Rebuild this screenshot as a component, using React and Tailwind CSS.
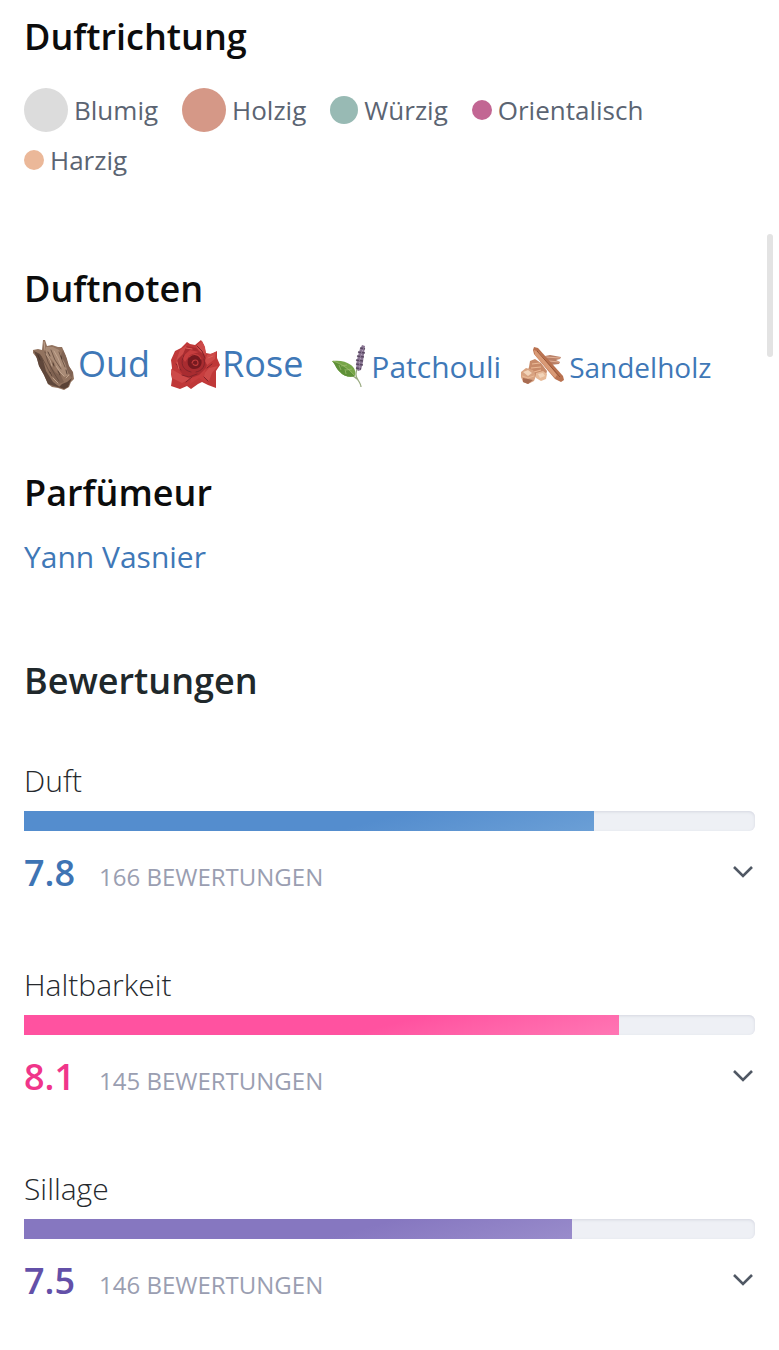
const accords = [
  { name: 'Blumig', dot: 'size-11 bg-[#dcdcdc]' },
  { name: 'Holzig', dot: 'size-11 bg-[#d59887]' },
  { name: 'Würzig', dot: 'size-7 bg-[#98bab4]' },
  { name: 'Orientalisch', dot: 'size-5 bg-[#c26693]' },
  { name: 'Harzig', dot: 'size-5 bg-[#ebb899]' },
];

const ratings = [
  { name: 'Duft', score: 7.8, fill: 78, votes: 166, text: 'text-[#3e74b4]', bar: 'from-[#548dce] to-[#6b9fd6]' },
  { name: 'Haltbarkeit', score: 8.1, fill: 81.4, votes: 145, text: 'text-[#f0358a]', bar: 'from-[#ff52a0] to-[#ff76b4]' },
  { name: 'Sillage', score: 7.5, fill: 75, votes: 146, text: 'text-[#6350a8]', bar: 'from-[#8677c0] to-[#998ccb]' },
];

function OudIcon() {
  return (
    <svg viewBox="0 0 54 54" className="size-[54px] shrink-0" aria-hidden="true">
      <path d="M19 3l2 0 2 6 5-1 6 2 4 0 4 9 2 9 5 7 1 7-3 3-2 5-5 3-6-2-6-1-4-3-4-9-5-9-2-8-4-5 0-3 5-1 4 1z" fill="#92735f" />
      <path d="M10 14l6 3 3 6 3 11 7 11 8 6-7-2-6-2-4-9-5-9-2-7z" fill="#5f473b" />
      <path d="M22 10l7 0 6 3 4 10 6 9 1 6-6 2-5-6-6-10-7-7z" fill="#a98b76" />
      <path d="M39 13l4 9 2 7 4 7-1 5-4-5-3-10-4-8z" fill="#806353" />
      <path d="M25 26l6 9 6 4 3 6-5 2-5-6-4-8z" fill="#7f6251" />
      <g fill="none" strokeLinecap="round">
        <path d="M21 15l3 10 6 11 5 8M27 13l4 10 6 9M35 15l3 8 3 7M17 19l5 9 4 8" stroke="#5f4739" strokeWidth="1" opacity=".75" />
        <path d="M22 17l4 6 2 6M30 14l4 7 3 8M32 29l4 6 4 4M20 5l1 8M29 41l5 5M42 41l3-3" stroke="#c8ad97" strokeWidth="1" opacity=".8" />
        <path d="M24 15l2 4M29 26l1 3M34 34l2 4M37 19l1 3M42 33l1 4M26 35l2 4M14 18l2 5" stroke="#3d2b22" strokeWidth="1" opacity=".7" />
      </g>
      <path d="M38 47l5-2 5-4-2 4-2 5-4 2-5-2z" fill="#5a4236" />
    </svg>
  );
}

function RoseIcon() {
  return (
    <svg viewBox="0 0 54 54" className="size-[54px] shrink-0" aria-hidden="true">
      <path d="M19 5l3 2 5 1 6-5 3 5 2 8 5 1 6-3 0 7 3 7-4 6 0 6 0 11-8-3-6-3-4 2-7 5-4-3-7 3-9-3 1-7-1-5 1-6-1-8 4-9 6-3z" fill="#bf3838" />
      <path d="M18 9l10 2 8 7 3 9-3 10-9 4-12-3-6-8 1-9 5-8z" fill="#a92c30" />
      <path d="M34 4l3 6 1 8-7-4-3-5zM39 18l9-3-1 7-8 6-2-4zM41 31l9-2-6 7-3 8-7-5zM12 13l7-5-4 9-7 7zM3 32l9 5 10 5-8 4-10-5z" fill="#cd4a49" />
      <path d="M14 20l8-7 9 2-9 3-5 7zM31 38l7-7-2 9 4 7-9-6-9 6 1-6z" fill="#c63d3e" />
      <path d="M21 20c-3 5-1 12 5 12s9-5 7-10c-3-6-9-6-12-2z" fill="#75191f" />
      <g fill="none" strokeLinecap="round">
        <path d="M24 26c1-4 6-4 6 0 0 3-4 3-5 1M21 20c4-4 10-3 12 2" stroke="#c23c3c" strokeWidth="1.1" />
        <path d="M16 18c-4 8-2 15 7 17M36 22c2 7-2 12-8 13M14 38l7 2 8-3M39 31l5-4M8 27l5 6M29 9l5 5 3 7M36 40l4 4M24 40l-6 5" stroke="#84232a" strokeWidth="1" />
        <path d="M9 25l2 7M18 11l6 1M40 21l5-2" stroke="#de605a" strokeWidth="1" />
      </g>
    </svg>
  );
}

function PatchouliIcon() {
  return (
    <svg viewBox="0 0 48 48" className="size-12 shrink-0" aria-hidden="true">
      <path d="M36 25c-1 5-2 8 1 12 2 3 3 5 3 7M36 36c-2-2-4-3-6-4" fill="none" stroke="#9aab82" strokeWidth="1.3" />
      <path d="M11 18c7-1 14 0 19 4 4 3 5 7 4 11-5 2-12 0-15-4-4-3-4-7-8-11z" fill="#76a548" />
      <path d="M11 18c9 2 16 8 23 15-5 2-12 0-15-4-4-3-4-7-8-11z" fill="#5f9138" />
      <path d="M12 18c9 3 16 8 22 15M20 23l6-1M25 27l6-1M18 22l2 5M24 26l1 5" fill="none" stroke="#a1bf71" strokeWidth=".7" />
      <path d="M41 2l3 1-1 8-1 8-2 8-3 1-2-3 1-8 2-8z" fill="#8a7694" />
      <path d="M39 5l5 1M37 9l7 1M36 13l7 1M35 17l7 1M35 21l7 1M35 25l5 1" stroke="#594862" strokeWidth="1.6" strokeDasharray="3 1" />
      <path d="M38 7l5 1M37 11l5 1M36 15l5 1M35 19l5 1M35 23l4 1" stroke="#b5a5bb" strokeWidth="1.1" strokeDasharray="1 2" />
    </svg>
  );
}

function SandalwoodIcon() {
  return (
    <svg viewBox="0 0 48 48" className="size-12 shrink-0" aria-hidden="true">
      <path d="M26 13l5-1 11 2-1 2-4 1 4 2-1 2-9 1z" fill="#b98067" />
      <path d="M27 14l14 1M30 18l10 1" stroke="#e2b095" strokeWidth="1.2" />
      <path d="M11 18l5-2 6 4 6 8-1 4-9 2-10-4 2-6z" fill="#c78a69" />
      <path d="M2 29l5-4 7 2 3 6-2 5-6 3-5-2-2-5z" fill="#d8a381" />
      <path d="M17 30l7-2 4 3-1 5-5 2-5-3z" fill="#e6b997" />
      <path d="M4 29l5-2 4 3-4 3zM19 31l5-1 2 3-5 2z" fill="#f2d4b9" />
      <path d="M4 35l5 1 5 1-5 4-5-2z" fill="#a86c52" />
      <path d="M15 4l4 1 25 28 1 4-3 2-6-3-21-25-1-4z" fill="#b9714f" />
      <path d="M15 7l5 2 18 23-2 3-20-23z" fill="#d99a76" />
      <path d="M18 8l23 26" stroke="#955638" strokeWidth="1" />
      <path d="M13 21l8-1M12 25l10-1M15 29l7-2M3 33l6 2 6-2" fill="none" stroke="#eab995" strokeWidth="1.1" />
    </svg>
  );
}

const notes = [
  { name: 'Oud', Icon: OudIcon, size: 'text-[36px] leading-[54px]' },
  { name: 'Rose', Icon: RoseIcon, size: 'text-[36px] leading-[54px]' },
  { name: 'Patchouli', Icon: PatchouliIcon, size: 'gap-0.5 text-[30px] leading-[48px]' },
  { name: 'Sandelholz', Icon: SandalwoodIcon, size: 'gap-0.5 text-[28px] leading-[48px]' },
];

function Heading({ children, color = 'text-[#0c0c0c]' }) {
  return <h2 className={`text-[36px] leading-[48px] font-semibold ${color}`}>{children}</h2>;
}

function Rating({ name, score, fill, votes, text, bar }) {
  return (
    <article>
      <h3 className="text-[30px] leading-[40px] font-light text-[#25292d]">{name}</h3>
      <div className="mt-2.5 h-5 overflow-hidden rounded-r-md bg-[#eef0f5] shadow-[inset_0_1px_3px_#d5d7e1]">
        <div className={`h-full bg-linear-165 from-60% ${bar}`} style={{ width: `${fill}%` }} />
      </div>
      <div className="mt-[18px] flex items-center justify-between">
        <p className="flex items-baseline gap-6 leading-[48px]">
          <span className={`text-[36px] font-semibold ${text}`}>{score}</span>
          <span className="text-[24px] text-[#9a9eb1]">{votes} BEWERTUNGEN</span>
        </p>
        <button type="button" aria-label={`${name}: Details anzeigen`} className="mb-1.5 p-0.5">
          <svg viewBox="0 0 20 12" className="h-3 w-5" fill="none" stroke="#505864" strokeWidth="2.6">
            <path d="M1 1l9 9 9-9" />
          </svg>
        </button>
      </div>
    </article>
  );
}

export default function App() {
  return (
    <main className="relative bg-white px-6 pt-[13px] pb-10 font-['Open_Sans',sans-serif]">
      <div className="absolute top-[234px] right-1.5 h-[123px] w-1.5 rounded-full bg-[#e3e3e3]" />

      <section>
        <Heading>Duftrichtung</Heading>
        <ul className="mt-[27px] flex flex-wrap items-center gap-x-6 gap-y-2">
          {accords.map(({ name, dot }) => (
            <li key={name} className="flex items-center gap-1.5 text-[26px] leading-[40px] text-[#5b6472]">
              <span className={`shrink-0 rounded-full ${dot}`} />
              {name}
            </li>
          ))}
        </ul>
      </section>

      <section className="mt-[85px]">
        <Heading>Duftnoten</Heading>
        <ul className="mt-6 flex flex-wrap items-end gap-x-[18px]">
          {notes.map(({ name, Icon, size }) => (
            <li key={name}>
              <a href="#" className={`flex items-center text-[#3f78b7] ${size}`}>
                <Icon />
                {name}
              </a>
            </li>
          ))}
        </ul>
      </section>

      <section className="mt-[78px]">
        <Heading>Parfümeur</Heading>
        <a href="#" className="mt-5 block text-[30px] leading-[40px] text-[#3f78b7]">Yann Vasnier</a>
      </section>

      <section className="mt-20">
        <Heading color="text-[#20282b]">Bewertungen</Heading>
        <div className="mt-14 flex flex-col gap-16">
          {ratings.map((rating) => (
            <Rating key={rating.name} {...rating} />
          ))}
        </div>
      </section>
    </main>
  );
}
